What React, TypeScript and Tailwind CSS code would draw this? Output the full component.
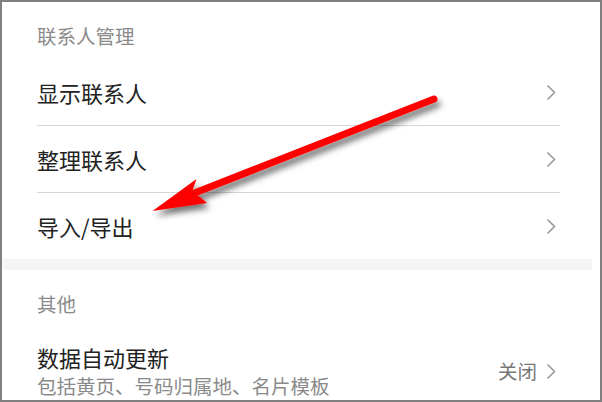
import React from 'react';

const font = { fontFamily: '"Noto Sans CJK SC", "Noto Sans", sans-serif' };

const Chevron = () => (
  <svg width="10" height="17" viewBox="0 0 10 17" className="shrink-0">
    <path d="M1.5 1.5 L8.5 8.5 L1.5 15.5" fill="none" stroke="#9a9a9a" strokeWidth="1.6" />
  </svg>
);

const SectionHeader = ({ title }: { title: string }) => (
  <div className="flex h-[57px] items-end pb-[10px] pl-[35px] text-[19.5px] leading-[27px] text-[#8a8a8a]">
    {title}
  </div>
);

const Row = ({ label, last }: { label: string; last?: boolean }) => (
  <div className="ml-[35px] mr-[40px]">
    <div
      className={`flex items-center justify-between pr-[4px] ${
        last ? 'h-[66px]' : 'h-[67px] border-b border-[#d6d6d6]'
      }`}
    >
      <span className="text-[22px] leading-[30px] text-[#222]">{label}</span>
      <Chevron />
    </div>
  </div>
);

export default function App() {
  return (
    <div
      className="relative h-[402px] w-[602px] overflow-hidden border-2 border-[#808080] bg-white"
      style={font}
    >
      <SectionHeader title="联系人管理" />
      <Row label="显示联系人" />
      <Row label="整理联系人" />
      <Row label="导入/导出" last />
      <div className="ml-px mr-[8px] h-[11px] bg-[#f5f5f5]" />
      <SectionHeader title="其他" />
      <div className="ml-[35px] mr-[40px] flex h-[88px] items-center justify-between pr-[4px]">
        <div className="flex flex-col">
          <span className="text-[22px] leading-[30px] text-[#222]">数据自动更新</span>
          <span className="text-[19.5px] leading-[28px] text-[#8a8a8a]">
            包括黄页、号码归属地、名片模板
          </span>
        </div>
        <div className="flex items-center gap-[9px]">
          <span className="text-[19.5px] leading-[28px] text-[#777]">关闭</span>
          <Chevron />
        </div>
      </div>

      <svg
        className="pointer-events-none absolute left-[-2px] top-[-2px]"
        width="602"
        height="402"
        viewBox="0 0 602 402"
      >
        <defs>
          <filter id="shadow" x="-20%" y="-20%" width="140%" height="160%">
            <feDropShadow dx="3" dy="5" stdDeviation="3" floodColor="#000" floodOpacity="0.55" />
          </filter>
        </defs>
        <g filter="url(#shadow)">
          <line
            x1="434"
            y1="99"
            x2="192"
            y2="194"
            stroke="#ff0000"
            strokeWidth="7"
            strokeLinecap="round"
          />
          <polygon points="152.5,211 196.5,179 192,192 200,197 207,203" fill="#ff0000" />
        </g>
      </svg>
    </div>
  );
}
